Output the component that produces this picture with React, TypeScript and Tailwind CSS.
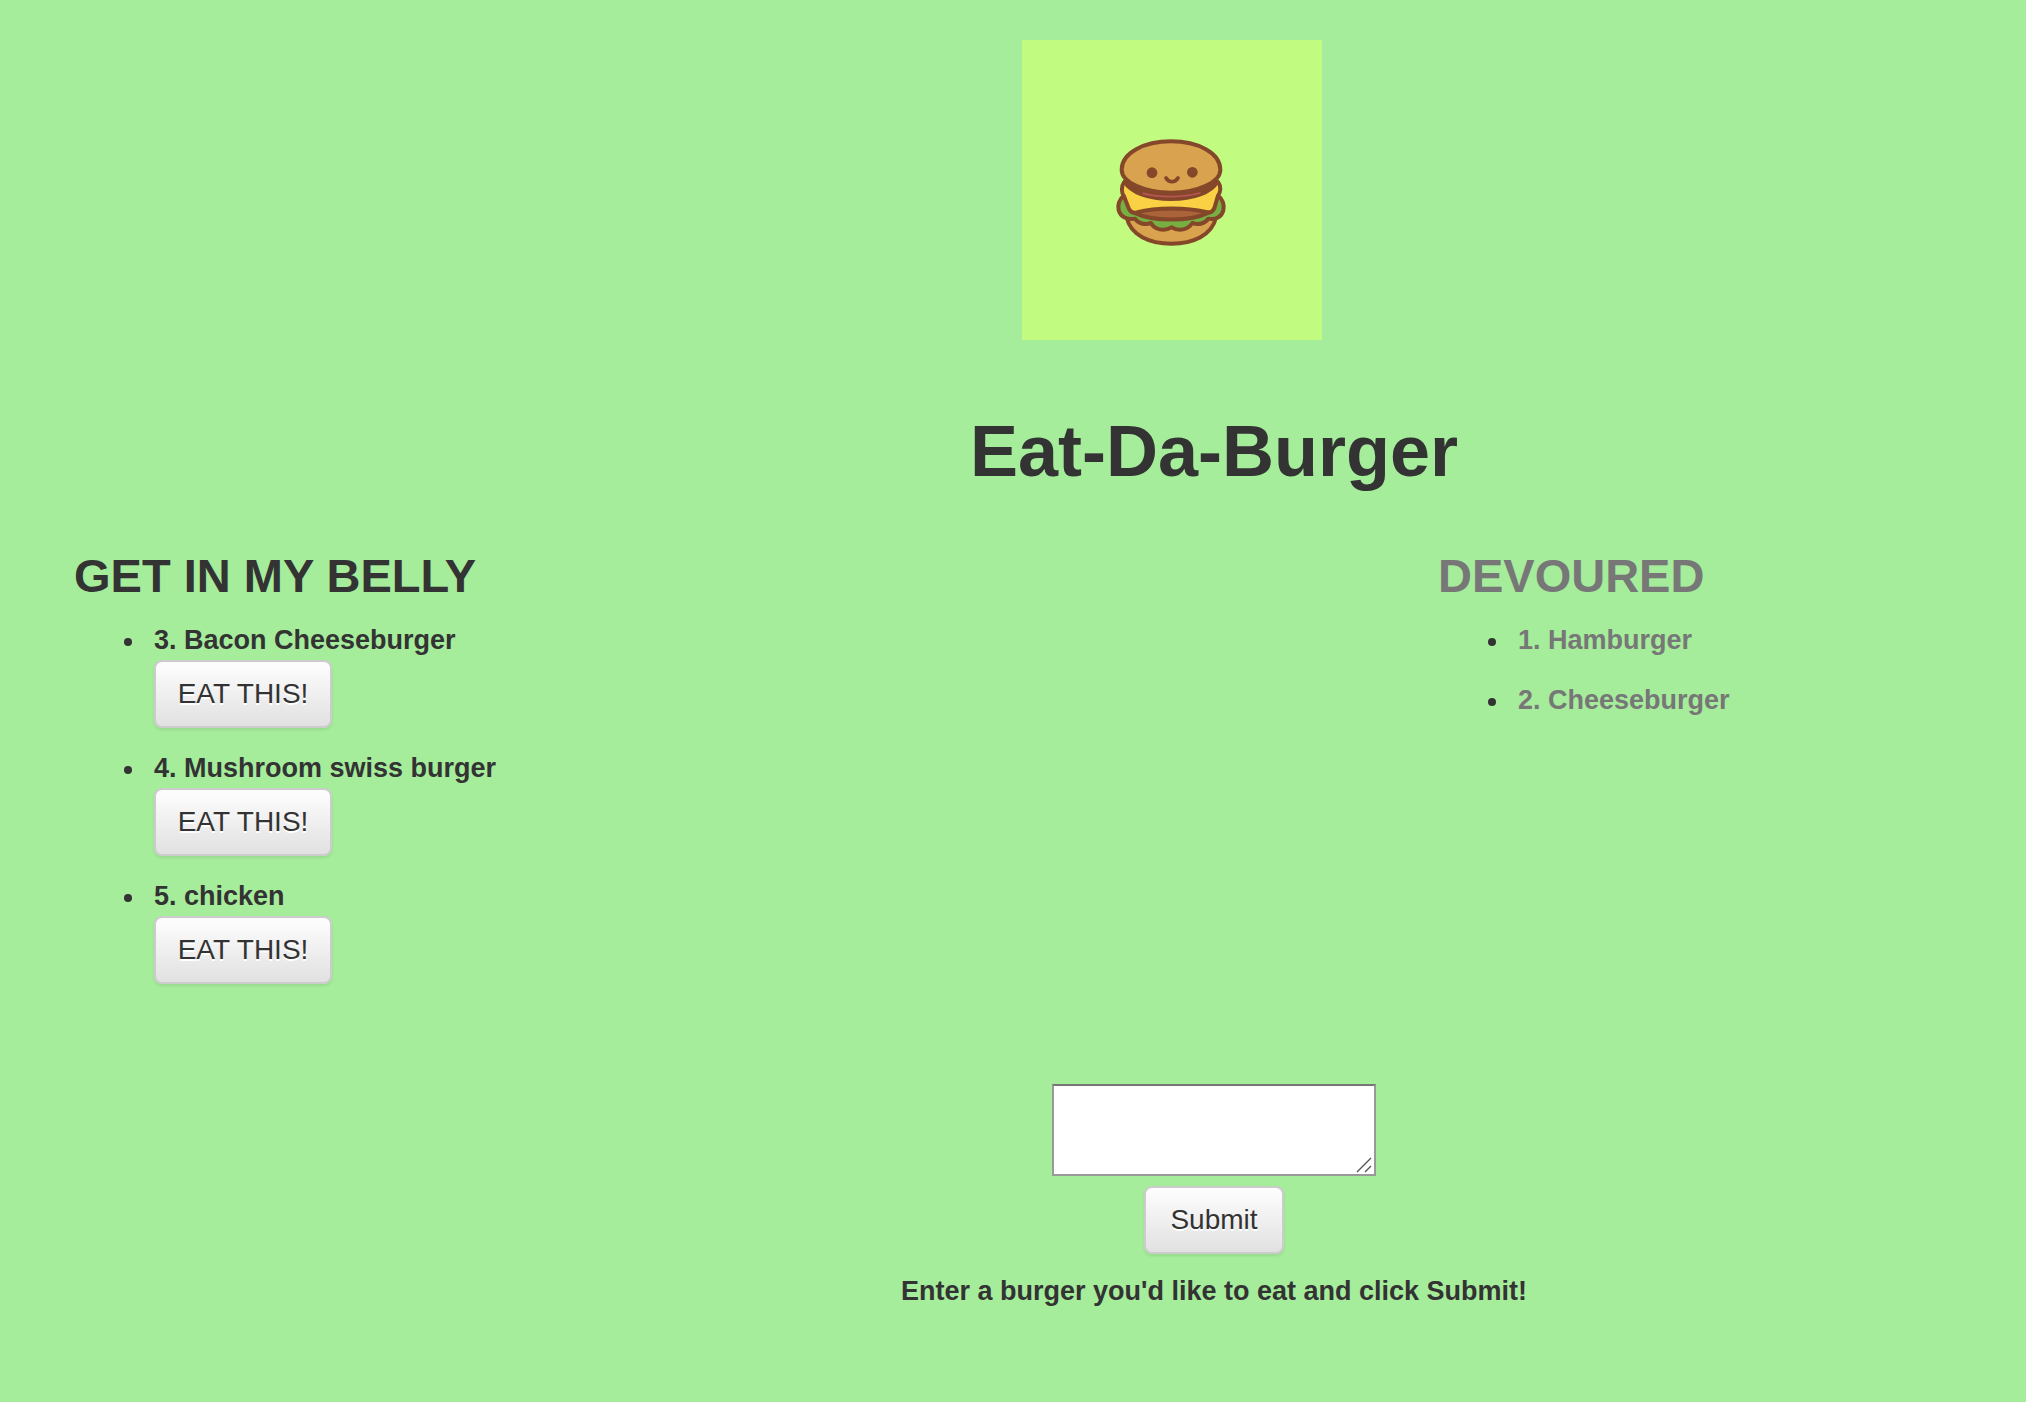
import React from "react";

type Burger = { id: number; name: string };

const waiting: Burger[] = [
  { id: 3, name: "Bacon Cheeseburger" },
  { id: 4, name: "Mushroom swiss burger" },
  { id: 5, name: "chicken" },
];

const devoured: Burger[] = [
  { id: 1, name: "Hamburger" },
  { id: 2, name: "Cheeseburger" },
];

const buttonStyle =
  "block h-[68px] cursor-pointer rounded-lg border-2 border-[#cccccc] bg-linear-to-b from-white to-[#e0e0e0] bg-origin-border text-[28px] leading-10 font-normal text-[#333333] [text-shadow:0_2px_0_#fff] shadow-[0_2px_3px_rgba(0,0,0,0.08)]";

const itemStyle =
  "relative before:absolute before:top-[18px] before:-left-[30px] before:size-2 before:rounded-full before:bg-[#333333]";

function BurgerLogo() {
  return (
    <svg
      viewBox="0 0 900 900"
      role="img"
      aria-label="Smiling burger"
      className="size-[300px] bg-[#c1fc80]"
    >
      <g
        transform="translate(234 255)"
        stroke="#85472a"
        strokeWidth="12"
        strokeLinecap="round"
        strokeLinejoin="round"
      >
        <path d="M80 278C92 330 148 356 214 356C280 356 336 330 348 278Z" fill="#d8a24e" />
        <path
          d="M72 212C58 222 52 240 56 256C61 275 82 286 105 281C114 295 134 301 153 294C164 314 192 321 214 307C238 321 264 314 277 294C296 301 316 295 325 281C346 286 366 275 370 256C374 240 368 222 354 212Z"
          fill="#76b043"
        />
        <path d="M100 262C160 291 268 291 328 262L300 250L128 250Z" fill="#ab633a" />
        <path
          d="M72 172C63 184 64 204 72 214L86 250C90 260 99 265 110 262C170 247 258 247 318 261C330 264 339 260 343 250L354 212C362 202 364 184 355 172Z"
          fill="#fad144"
        />
        <path d="M74 170C92 202 146 222 213 222C280 222 334 202 352 170Z" fill="#85472a" />
        <path d="M130 205C180 218 246 218 300 204" fill="none" stroke="#b95555" strokeWidth="5" />
        <path
          d="M65 134C65 84 132 49 213 49C294 49 361 84 361 134C361 172 294 203 213 203C132 203 65 172 65 134Z"
          fill="#d8a24e"
        />
        <path d="M198 159C207 174 225 174 234 159" fill="none" strokeWidth="11" />
      </g>
      <g transform="translate(234 255)" fill="#85472a">
        <circle cx="156" cy="143" r="16" />
        <circle cx="277" cy="142" r="16" />
      </g>
    </svg>
  );
}

export default function App() {
  return (
    <div className="min-h-screen bg-[#a5ec9b] py-10 font-['Liberation_Sans',Arial,sans-serif] text-[27px] leading-10 text-[#333333]">
      <header>
        <div className="flex justify-center pl-[318px]">
          <BurgerLogo />
        </div>
        <h1 className="mt-[71px] pl-[402px] text-center text-[72px] leading-20 font-bold">
          Eat-Da-Burger
        </h1>
      </header>

      <main className="mt-[45px] grid grid-cols-[1364fr_588fr] pl-[74px]">
        <section>
          <h2 className="text-[47px] leading-20 font-bold">GET IN MY BELLY</h2>
          <ul className="mt-1 flex flex-col gap-5 pl-20">
            {waiting.map((b) => (
              <li key={b.id} className={itemStyle}>
                <p className="font-bold">
                  {b.id}. {b.name}
                </p>
                <button type="button" className={buttonStyle + " w-[178px]"}>
                  EAT THIS!
                </button>
              </li>
            ))}
          </ul>
        </section>

        <section>
          <h2 className="text-[47px] leading-20 font-bold text-[#777777]">DEVOURED</h2>
          <ul className="mt-1 flex flex-col gap-5 pl-20">
            {devoured.map((b) => (
              <li key={b.id} className={itemStyle}>
                <p className="font-bold text-[#777777]">
                  {b.id}. {b.name}
                </p>
              </li>
            ))}
          </ul>
        </section>
      </main>

      <form
        className="mt-[100px] flex flex-col items-center pl-[402px]"
        onSubmit={(e) => e.preventDefault()}
      >
        <div className="relative">
          <textarea
            id="burger"
            className="block h-[92px] w-[324px] resize-none border-2 border-[#999999] border-t-[#767676] bg-white p-1 outline-none"
          />
          <svg
            viewBox="0 0 16 16"
            aria-hidden="true"
            className="pointer-events-none absolute right-1 bottom-[3px] size-4"
          >
            <path d="M1 15L15 1M9 15L15 9" fill="none" stroke="#555555" strokeWidth="1.400" />
          </svg>
        </div>
        <button type="submit" className={buttonStyle + " mt-[10px] w-[140px]"}>
          Submit
        </button>
        <label htmlFor="burger" className="mt-[17px] font-bold">
          Enter a burger you'd like to eat and click Submit!
        </label>
      </form>
    </div>
  );
}
